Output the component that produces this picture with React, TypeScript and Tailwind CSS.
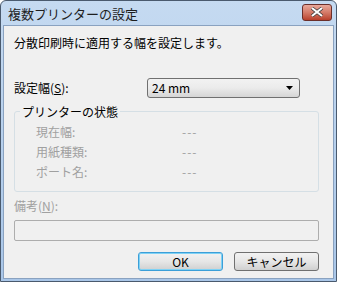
import React from 'react';

const font = { fontFamily: '"Noto Sans CJK JP", "Noto Sans", sans-serif' };

const StatusRow: React.FC<{ label: string }> = ({ label }) => (
    <div className="flex items-center h-[20px]">
        <span className="w-[167px] pl-[21px] text-[#a0a0a0]">{label}</span>
        <span className="text-[#a0a0a0] tracking-[1px]">---</span>
    </div>
);

const Button: React.FC<{ children: React.ReactNode; primary?: boolean }> = ({ children, primary }) => (
    <button
        className={`w-[85px] h-[19px] rounded-[3px] border flex items-center justify-center leading-none bg-gradient-to-b from-[#f2f2f2] via-[#e6e6e6] to-[#d0d0d0] ${
            primary ? 'border-[#3c9fd8] shadow-[inset_0_0_0_1px_#7fd2f5]' : 'border-[#707070]'
        }`}
    >
        {children}
    </button>
);

export default function App() {
    return (
        <div className="w-[337px] h-[282px] text-[12px] text-black" style={font}>
            <div className="w-full h-full flex flex-col rounded-t-[6px] border border-[#4a5a6e] bg-gradient-to-b from-[#c5daf1] to-[#a9c6e8]">
                {/* title bar */}
                <div className="h-[24px] flex items-center justify-between pl-[7px] pr-[4px]">
                    <span className="text-[13px] text-[#1e1e1e] leading-none">複数プリンターの設定</span>
                    <div className="w-[30px] h-[17px] mb-[2px] rounded-[3px] border border-[#6b2f2a] bg-gradient-to-b from-[#e8a89a] via-[#d47a68] to-[#b8402c] flex items-center justify-center">
                        <svg width="12" height="10" viewBox="0 0 12 10">
                            <path d="M1 1 L11 9 M11 1 L1 9" stroke="#3a3a3a" strokeWidth="3.4" />
                            <path d="M1 1 L11 9 M11 1 L1 9" stroke="#ffffff" strokeWidth="2.2" />
                        </svg>
                    </div>
                </div>

                {/* client */}
                <div className="flex-1 mx-[2px] mb-[2px] border border-[#8aa2c0] bg-[#f0f0f0] flex flex-col pl-[10px] pr-[13px]">
                    <div className="mt-[8px] h-[18px] flex items-center">分散印刷時に適用する幅を設定します。</div>

                    <div className="mt-[26px] flex items-center h-[20px]">
                        <span className="w-[133px]">
                            設定幅(<span className="underline">S</span>):
                        </span>
                        <div className="w-[153px] h-[20px] rounded-[3px] border border-[#707070] bg-gradient-to-b from-[#f2f2f2] via-[#ebebeb] to-[#d5d5d5] flex items-center justify-between pl-[4px] pr-[6px]">
                            <span>24 mm</span>
                            <svg width="7" height="4" viewBox="0 0 7 4">
                                <path d="M0 0 H7 L3.5 4 Z" fill="#000" />
                            </svg>
                        </div>
                    </div>

                    {/* group box */}
                    <div className="mt-[13px] relative w-[305px] h-[81px] border border-[#d5dfe5] rounded-[3px] pt-[10px]">
                        <span className="absolute -top-[9px] left-[5px] px-[2px] bg-[#f0f0f0]">プリンターの状態</span>
                        <StatusRow label="現在幅:" />
                        <StatusRow label="用紙種類:" />
                        <StatusRow label="ポート名:" />
                    </div>

                    <div className="mt-[5px] h-[18px] flex items-center text-[#a0a0a0]">
                        備考(<span className="underline">N</span>):
                    </div>
                    <div className="mt-[5px] w-[305px] h-[21px] border border-[#adadad] rounded-[2px] bg-[#f0f0f0]" />

                    <div className="mt-[11px] w-[305px] flex justify-end gap-[11px]">
                        <Button primary>OK</Button>
                        <Button>キャンセル</Button>
                    </div>
                </div>
            </div>
        </div>
    );
}
